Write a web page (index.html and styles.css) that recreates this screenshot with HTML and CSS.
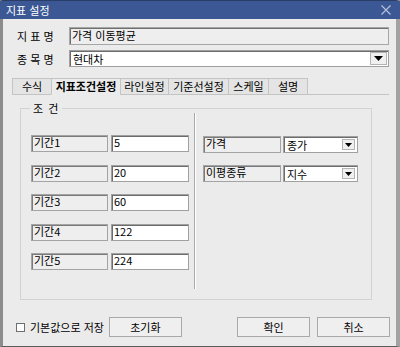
FILE: index.html
```html
<!doctype html>
<html lang="ko">
<head>
    <meta charset="utf-8">
    <title>지표 설정</title>
    <link rel="stylesheet" href="styles.css">
</head>
<body>
    <div class="window">
        <div class="titlebar">
            <span class="title">지표 설정</span>
            <svg class="close" width="10" height="10" viewBox="0 0 10 10">
                <path d="M0.5 0.5 L9.5 9.5 M9.5 0.5 L0.5 9.5" stroke="#b4c1dc" stroke-width="1.2" fill="none"/>
            </svg>
        </div>

        <div class="content">
            <div class="field-row">
                <span class="field-label">지 표 명</span>
                <div class="textbox readonly">가격 이동평균</div>
            </div>
            <div class="field-row second">
                <span class="field-label">종 목 명</span>
                <div class="combo wide">
                    <span class="combo-text">현대차</span>
                    <span class="drop-button big">
                        <svg width="9" height="5" viewBox="0 0 9 5"><path d="M0 0 L9 0 L4.5 5 Z" fill="#000"/></svg>
                    </span>
                </div>
            </div>

            <div class="tabs">
                <div class="tab t-formula">수식</div>
                <div class="tab active t-cond">지표조건설정</div>
                <div class="tab t-line">라인설정</div>
                <div class="tab t-base">기준선설정</div>
                <div class="tab t-scale">스케일</div>
                <div class="tab t-desc">설명</div>
                <div class="tab-rest"></div>
            </div>

            <div class="tab-page">
                <div class="group">
                    <span class="legend">조 건</span>
                    <div class="group-inner">
                        <div class="col-left">
                            <div class="param-row">
                                <div class="param-label">기간1</div>
                                <div class="param-input">5</div>
                            </div>
                            <div class="param-row">
                                <div class="param-label">기간2</div>
                                <div class="param-input">20</div>
                            </div>
                            <div class="param-row">
                                <div class="param-label">기간3</div>
                                <div class="param-input">60</div>
                            </div>
                            <div class="param-row">
                                <div class="param-label">기간4</div>
                                <div class="param-input">122</div>
                            </div>
                            <div class="param-row">
                                <div class="param-label">기간5</div>
                                <div class="param-input">224</div>
                            </div>
                        </div>

                        <div class="divider"></div>

                        <div class="col-right">
                            <div class="param-row">
                                <div class="param-label wide-label">가격</div>
                                <div class="combo small">
                                    <span class="combo-text">종가</span>
                                    <span class="drop-button">
                                        <svg width="7" height="4" viewBox="0 0 7 4"><path d="M0 0 L7 0 L3.5 4 Z" fill="#000"/></svg>
                                    </span>
                                </div>
                            </div>
                            <div class="param-row">
                                <div class="param-label wide-label">이평종류</div>
                                <div class="combo small">
                                    <span class="combo-text">지수</span>
                                    <span class="drop-button">
                                        <svg width="7" height="4" viewBox="0 0 7 4"><path d="M0 0 L7 0 L3.5 4 Z" fill="#000"/></svg>
                                    </span>
                                </div>
                            </div>
                        </div>
                    </div>
                </div>
            </div>

            <div class="footer">
                <span class="checkbox"></span>
                <span class="check-text">기본값으로 저장</span>
                <button type="button" class="btn">초기화</button>
                <div class="spacer"></div>
                <button type="button" class="btn">확인</button>
                <button type="button" class="btn">취소</button>
            </div>
        </div>
    </div>
</body>
</html>
```

FILE: styles.css
```css
html, body {
    margin: 0;
    padding: 0;
    background-color: #ebebeb;
}

body {
    font-family: "Noto Sans CJK KR", "Noto Sans", sans-serif;
    font-size: 11px;
    color: #000000;
}

.window {
    width: 400px;
    height: 347px;
    box-sizing: border-box;
    display: flex;
    flex-direction: column;
    background-color: #ebebeb;
    border-top: 1px solid #2a3d66;
    border-left: 3px solid #8c8c8c;
    border-right: 4px solid #a2a2a2;
    border-bottom: 1px solid #5a5a5a;
}

.titlebar {
    height: 18px;
    margin-left: -3px;
    margin-right: -4px;
    background-color: #3b5895;
    color: #ffffff;
    display: flex;
    align-items: center;
    padding: 0 9px 0 6px;
    font-size: 11px;
    line-height: 18px;
}

.title {
    flex: 1;
}

.content {
    flex: 1;
    display: flex;
    flex-direction: column;
}

/* top fields */
.field-row {
    display: flex;
    align-items: center;
    margin-top: 8px;
    margin-right: 7px;
    padding-left: 14px;
}

.field-row.second {
    margin-top: 5px;
}

.field-label {
    width: 52px;
    line-height: 14px;
}

.textbox {
    flex: 1;
    height: 18px;
    box-sizing: border-box;
    line-height: 15px;
    padding-left: 2px;
    border: 1px solid #a6a6a6;
    box-shadow: inset 1px 1px 0 #707070;
}

.readonly {
    background-color: #eeeeee;
}

.combo {
    display: flex;
    align-items: center;
    box-sizing: border-box;
    background-color: #ffffff;
    border: 1px solid #a0a0a0;
    box-shadow: inset 1px 1px 0 #6c6c6c;
}

.combo.wide {
    flex: 1;
    height: 17px;
}

.combo-text {
    flex: 1;
    padding-left: 3px;
    line-height: 14px;
}

.drop-button {
    width: 13px;
    height: 11px;
    margin-right: 2px;
    box-sizing: border-box;
    border: 1px solid #b4b4b4;
    background-color: #f0f0f0;
    display: flex;
    align-items: center;
    justify-content: center;
}

.drop-button.big {
    width: 17px;
    height: 13px;
    margin-right: 1px;
}

/* tabs */
.tabs {
    display: flex;
    align-items: flex-end;
    height: 18px;
    margin-top: 10px;
    margin-left: 9px;
    margin-right: 7px;
}

.tab {
    height: 17px;
    box-sizing: border-box;
    border: 1px solid #c4c4c4;
    border-right: none;
    background-color: #e4e4e4;
    text-align: center;
    line-height: 14px;
}

.tab.active {
    background-color: #ebebeb;
    border-bottom-color: #ebebeb;
    font-weight: bold;
}

.t-formula { width: 39px; }
.t-cond { width: 69px; }
.t-line { width: 48px; }
.t-base { width: 60px; }
.t-scale { width: 40px; }
.t-desc {
    width: 40px;
    border-right: 1px solid #c4c4c4;
}

.tab-rest {
    flex: 1;
    height: 17px;
    box-sizing: border-box;
    border-bottom: 1px solid #c4c4c4;
}

/* group box */
.tab-page {
    padding-left: 17px;
    padding-top: 13px;
}

.group {
    position: relative;
    width: 352px;
    height: 192px;
    box-sizing: border-box;
    border: 1px solid #d2d2d2;
    padding-top: 4px;
}

.legend {
    position: absolute;
    top: -8px;
    left: 9px;
    padding: 0 3px;
    background-color: #ebebeb;
    line-height: 14px;
    letter-spacing: 1px;
}

.group-inner {
    display: flex;
    height: 176px;
}

.col-left {
    width: 168px;
    box-sizing: border-box;
    padding-left: 10px;
    padding-top: 22px;
    display: flex;
    flex-direction: column;
    gap: 12.5px;
}

.col-right {
    padding-left: 7px;
    padding-top: 23px;
    display: flex;
    flex-direction: column;
    gap: 12px;
}

.divider {
    width: 0;
    border-left: 1px solid #a8a8a8;
    border-right: 1px solid #ffffff;
    margin-left: 5px;
}

.param-row {
    display: flex;
    gap: 3px;
    height: 17px;
}

.param-label {
    width: 77px;
    height: 17px;
    box-sizing: border-box;
    background-color: #eeeeee;
    border: 1px solid #a4a4a4;
    box-shadow: inset 1px 1px 0 #7a7a7a;
    padding-left: 2px;
    line-height: 12px;
}

.wide-label {
    width: 78px;
}

.col-right .param-row {
    gap: 2px;
}

.param-input {
    width: 78px;
    height: 17px;
    box-sizing: border-box;
    background-color: #ffffff;
    border: 1px solid #a0a0a0;
    box-shadow: inset 1px 1px 0 #6c6c6c;
    padding-left: 2px;
    line-height: 13px;
}

.combo.small {
    width: 75px;
    height: 17px;
}

/* footer */
.footer {
    display: flex;
    align-items: center;
    margin-top: 17px;
    padding-left: 13px;
    margin-right: 6px;
}

.checkbox {
    width: 9px;
    height: 9px;
    box-sizing: border-box;
    border: 1px solid #6f6f6f;
    background-color: #ffffff;
}

.check-text {
    margin-left: 5px;
    margin-right: 5px;
}

.spacer {
    flex: 1;
}

.btn {
    width: 73px;
    height: 20px;
    margin-left: 0;
    padding: 0;
    font-family: "Noto Sans CJK KR", "Noto Sans", sans-serif;
    font-size: 11px;
    color: #000000;
    background-color: #efefef;
    border: 1px solid #a9a9a9;
    border-radius: 0;
}

.btn + .btn {
    margin-left: 7px;
}
```
